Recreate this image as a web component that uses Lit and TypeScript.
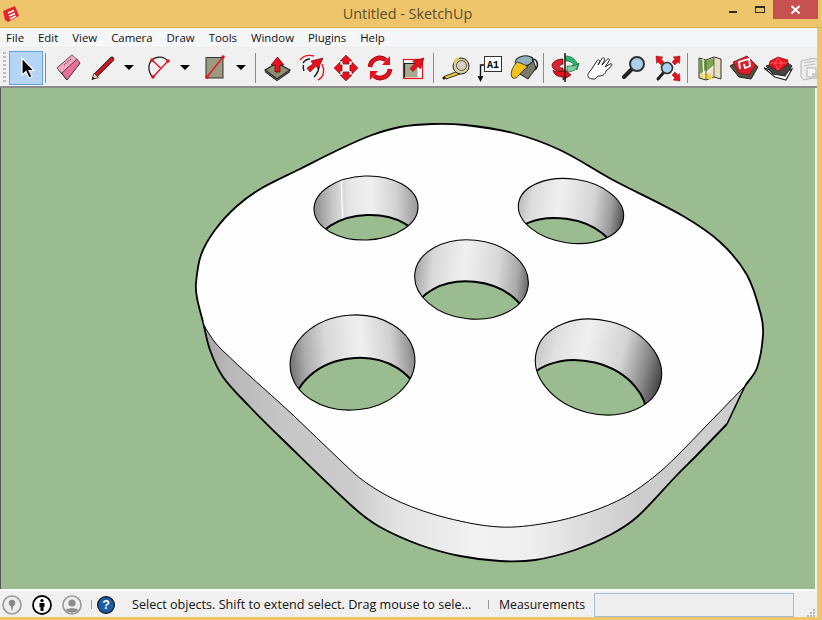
import { LitElement, html, css, svg } from "lit";
import { customElement } from "lit/decorators.js";

type Pt = [number, number];

// smooth curve through the traced points, tangent handles scaled by chord so it doesn't overshoot
function smooth(p: Pt[]): string {
  let d = `M${p[0][0]} ${p[0][1]}`;
  for (let i = 0; i < p.length - 1; i++) {
    const a = p[Math.max(i - 1, 0)];
    const b = p[i];
    const c = p[i + 1];
    const e = p[Math.min(i + 2, p.length - 1)];
    const len = Math.hypot(c[0] - b[0], c[1] - b[1]) / 3;
    const t1 = Math.hypot(c[0] - a[0], c[1] - a[1]) || 1;
    const t2 = Math.hypot(e[0] - b[0], e[1] - b[1]) || 1;
    const c1x = b[0] + ((c[0] - a[0]) / t1) * len;
    const c1y = b[1] + ((c[1] - a[1]) / t1) * len;
    const c2x = c[0] - ((e[0] - b[0]) / t2) * len;
    const c2y = c[1] - ((e[1] - b[1]) / t2) * len;
    d += ` C${c1x.toFixed(1)} ${c1y.toFixed(1)} ${c2x.toFixed(1)} ${c2y.toFixed(1)} ${c[0]} ${c[1]}`;
  }
  return d;
}

const upperEdge: Pt[] = [
  [203, 322], [197, 298], [196, 283], [201, 255], [215, 230], [237, 206], [262, 188], [300, 169], [340, 149],
  [372, 135], [400, 127], [432, 124], [465, 125], [513, 133], [560, 150], [613, 180], [683, 216], [720, 242],
  [747, 275], [761, 315], [763, 335], [757, 368], [745, 386],
];
const lowerEdge: Pt[] = [
  [745, 386], [707, 425], [677, 456], [655, 476], [625, 497], [590, 512], [547, 523], [500, 527], [447, 518],
  [400, 502], [365, 482], [340, 460], [293, 415], [220, 348], [206, 329], [203, 322],
];
const outerEdge: Pt[] = [
  [203, 322], [210, 350], [223, 377], [250, 407], [280, 437], [353, 507], [380, 527], [420, 545],
  [460, 556], [500, 561], [535, 560], [575, 550], [610, 535], [637, 517], [677, 475], [697, 455], [727, 424],
];

interface Hole {
  cx: number; cy: number; rx: number; ry: number; rot: number; dx: number; dy: number;
  stops: [number, string][];
}

const holes: Hole[] = [
  { cx: 366, cy: 208, rx: 52, ry: 32, rot: -2, dx: 2, dy: 39, stops: [[0, "#8c8c8c"], [0.18, "#c6c6c6"], [0.26, "#dadada"], [0.27, "#fafafa"], [0.29, "#d8d8d8"], [0.33, "#e4e4e4"], [0.55, "#f0f0f0"], [0.8, "#d0d0d0"], [1, "#999"]] },
  { cx: 571, cy: 211, rx: 53, ry: 32, rot: 8, dx: -9, dy: 39.5, stops: [[0, "#bbb"], [0.12, "#dcdcdc"], [0.38, "#f0f0f0"], [0.7, "#d4d4d4"], [0.88, "#999"], [1, "#505050"]] },
  { cx: 471.5, cy: 279.5, rx: 57, ry: 39.5, rot: 6, dx: -1, dy: 41.5, stops: [[0, "#a4a4a4"], [0.15, "#d8d8d8"], [0.42, "#f0f0f0"], [0.72, "#d8d8d8"], [0.9, "#a8a8a8"], [1, "#666"]] },
  { cx: 352.5, cy: 362.5, rx: 62.5, ry: 47.5, rot: -5, dx: 4, dy: 43, stops: [[0, "#707070"], [0.12, "#aaaaaa"], [0.3, "#d8d8d8"], [0.58, "#f0f0f0"], [0.82, "#d0d0d0"], [1, "#888"]] },
  { cx: 598.5, cy: 367, rx: 64, ry: 46.8, rot: 14, dx: -15, dy: 41, stops: [[0, "#c8c8c8"], [0.14, "#e0e0e0"], [0.36, "#f0f0f0"], [0.66, "#d4d4d4"], [0.86, "#888"], [1, "#444"]] },
];

const sideStops: [number, string][] = [
  [0, "#a0a0a0"], [0.05, "#b8b8b8"], [0.15, "#c6c6c6"], [0.28, "#cccccc"], [0.36, "#e2e2e2"],
  [0.5, "#f2f2f2"], [0.6, "#efefef"], [0.7, "#dcdcdc"], [0.8, "#cccccc"], [1, "#cfcfcf"],
];

const red = "#e8101c";

const icons: Record<string, unknown> = {
  select: svg`<path d="M13 7V24L17 20.5 20 27 23 25.5 20 19.5H25Z" fill="#000" stroke="#fff" stroke-width="1.2"/>`,
  eraser: svg`
    <path d="M6 17 21 4 29 12 16 29Z" fill="#f28ca8" stroke="#333"/>
    <path d="M6 17 21 4 26 8 11 22Z" fill="#f7a8c0" stroke="#555" stroke-width=".6"/>
    <path d="M11 22 26 8 29 12 16 29Z" fill="#ec6f96" stroke="#333" stroke-width=".7"/>
    <path d="M13 14 20 8" stroke="#8a4a5c" stroke-width="1.4" stroke-dasharray="1 1"/>`,
  pencil: svg`
    <path d="M10 24 26 8" stroke="#222" stroke-width="4.6" stroke-linecap="round"/>
    <path d="M10 24 26 8" stroke="#e3101d" stroke-width="2.8" stroke-linecap="round"/>
    <path d="M6 28.5 8 22 12.5 26.5Z" fill="#e5cfa8" stroke="#222" stroke-width=".8"/>
    <path d="M6 28.5 6.8 26 9 27.6Z" fill="#111"/>`,
  arc: svg`
    <path d="M26 10C22 5 14 5 10 9 5.5 13 6 22 11 26" fill="none" stroke="#222" stroke-width="1.3"/>
    <path d="M10 9 19 17.5M26 10 11 26" stroke="${red}" stroke-width="1.3"/>
    <g fill="${red}"><circle cx="10" cy="9" r="1.8"/><circle cx="26" cy="10" r="1.8"/><circle cx="11" cy="26" r="1.8"/></g>`,
  rect: svg`
    <rect x="8" y="6.5" width="17" height="20.5" fill="#9b9b82" stroke="#333"/>
    <path d="M25 6 9 26" stroke="${red}" stroke-width="1.3"/>
    <g fill="${red}"><circle cx="25" cy="6" r="1.8"/><circle cx="9" cy="26" r="1.8"/></g>`,
  pushpull: svg`
    <path d="M5 19 17 12 30 19 17 28Z" fill="#8e8e70" stroke="#222" stroke-width="1.2"/>
    <path d="M5 20.5 17 29.5 30 20.5" fill="none" stroke="#333" stroke-width="1.2"/>
    <path d="M17.5 6 24 14H20V21H15V14H11Z" fill="${red}" stroke="#500" stroke-width=".7"/>`,
  follow: svg`
    <path d="M6 9C10 4 16 4 20 5M28 13C31 19 30 26 24 29" fill="none" stroke="${red}" stroke-width="1.4"/>
    <path d="M9 12C11 9 13 8 16 8M10 20C9 18 9 16 9.5 14M25 15C25 20 23 23 20 26" fill="none" stroke="#222" stroke-width="1.5"/>
    <path d="M13 17 19 13 17 10 29 7 24 18 22 15 16 21Z" fill="${red}" stroke="#500" stroke-width=".6"/>`,
  move: svg`
    <path d="M15 12H21V22H15Z M13 14V20H23V14Z" fill="#d4d4d4"/>
    <g fill="${red}" stroke="#600" stroke-width=".5">
      <path d="M18 4 24 10H21V13H15V10H12Z"/>
      <path d="M18 30 24 24H21V21H15V24H12Z"/>
      <path d="M6 17 12 11V14H14V20H12V23Z"/>
      <path d="M30 17 24 11V14H22V20H24V23Z"/>
    </g>
    <rect x="15.5" y="14.5" width="5" height="5" fill="#eee"/>`,
  rotate: svg`
    <g fill="none" stroke="#7a0a10" stroke-width="4.6"><path d="M8 16A10 10 0 0 1 24 9"/><path d="M28 18A10 10 0 0 1 12 25"/></g>
    <g fill="none" stroke="${red}" stroke-width="3.4"><path d="M8 16A10 10 0 0 1 24 9"/><path d="M28 18A10 10 0 0 1 12 25"/></g>
    <path d="M28 5V14H20Z M8 29V20H16Z" fill="${red}"/>`,
  scale: svg`
    <rect x="7.5" y="8.5" width="19" height="19" fill="#fff" stroke="${red}" stroke-width="1.2"/>
    <rect x="8.5" y="12.5" width="13" height="14" fill="#a9a98e"/>
    <path d="M8.5 26.5V12.5H21.5" fill="none" stroke="#222" stroke-width="1.2"/>
    <path d="M28 7 24.5 18 22 15.5 17 20.5 14 17.5 19 12.5 16.5 10Z" fill="${red}" stroke="#600" stroke-width=".5"/>`,
  tape: svg`
    <path d="M5 25.5 18 20.5 21 23 7 28Z" fill="#e9c93a" stroke="#222" stroke-width=".9"/>
    <circle cx="22" cy="15" r="8" fill="#d9cf9a" stroke="#222"/>
    <circle cx="22.5" cy="14.5" r="5" fill="#d6d0bc" stroke="#555"/>
    <path d="M14.6 12.5C16 9 18 7.5 20 7" fill="none" stroke="#e9c93a" stroke-width="1.6"/>
    <circle cx="5" cy="27" r="1.6" fill="#222"/>`,
  text: svg`
    <rect x="11.5" y="5.5" width="17" height="15" fill="#fff" stroke="#333"/>
    <text x="20" y="17" class="a1">A1</text>
    <path d="M11 14H7.5V26" fill="none" stroke="#111" stroke-width="1.4"/>
    <path d="M4.5 25H10.5L7.5 31Z" fill="#111"/>`,
  paint: svg`
    <path d="M11 8 25 6 29 17 21 28 11 22Z" fill="#7a7868" stroke="#222"/>
    <ellipse cx="17" cy="10" rx="9" ry="5" transform="rotate(-10 17 10)" fill="#8fb0b8" stroke="#222"/>
    <path d="M10 11C5 16 2 25 6 27 11 29 13 20 21 16 17 13 13 12 10 11Z" fill="#f2c21d" stroke="#222" stroke-width=".8"/>
    <path d="M25 8C31 8 32 15 28 19" fill="none" stroke="#222" stroke-width="1.6"/>`,
  orbit: svg`
    <path d="M17 5C23 5 28 8 29 13L31 12 29 19 24 14 26 14C25 11 21 10 18 10Z" fill="#2fb36e" stroke="#163" stroke-width=".7"/>
    <path d="M19 15C24 15 28 15 30 13 30 18 25 21 19 21Z" fill="#7fd0a0" stroke="#163" stroke-width=".7"/>
    <path d="M15 8C10 8 5 10 4 14 4 18 8 20 15 21V17C11 17 9 15 15 13Z" fill="#d9232e" stroke="#500" stroke-width=".7"/>
    <path d="M16 20C11 21 7 21 5 19 6 24 10 26 15 26L15 29 23 24 16 18Z" fill="${red}" stroke="#500" stroke-width=".7"/>
    <path d="M17 2V31" stroke="#222" stroke-width="1.6"/>`,
  pan: svg`
    <path d="M7 27C5 25 6 22 9 19L15 10C16 8 18 9 17.5 11L16 14 20 7.5C21 6 23 7 22.5 9L20 14 25 8.5C26.5 7 28 8.5 27 10L23 16 28 13C30 12 30.5 14 29 15.5L24 20C23 24 20 25 16 25L13 28C11 28 9 28 7 27Z" fill="#fff" stroke="#222" stroke-width="1"/>`,
  zoom: svg`
    <path d="M8 26 16 18" stroke="#222" stroke-width="4" stroke-linecap="round"/>
    <circle cx="21" cy="13" r="7" fill="#a8d0f0" stroke="#333" stroke-width="2"/>`,
  extents: svg`
    <path d="M8 28 14 21" stroke="#222" stroke-width="3" stroke-linecap="round"/>
    <circle cx="17" cy="17" r="5.5" fill="#a8d0f0" stroke="#333" stroke-width="1.6"/>
    <g fill="${red}" stroke="#600" stroke-width=".4">
      <path d="M6 5 13 6 11 8 14 11 11 14 8 11 6.5 12.5Z"/>
      <path d="M30 5 23 6 25 8 22 11 25 14 28 11 29.5 12.5Z"/>
      <path d="M30 30 23 29 25 27 22 24 25 21 28 24 29.5 22.5Z"/>
    </g>`,
  map: svg`
    <path d="M6 7 13 9 21 6 28 8V28L21 26 13 29 6 27Z" fill="#e6dcc0" stroke="#333"/>
    <path d="M6.5 8 13 10V19L6.5 23Z" fill="#6f9a4a"/>
    <path d="M13 10 21 7V15L13 22Z" fill="#7ea84e"/>
    <path d="M7 26 13 21 21 28 13 28Z" fill="#f0cf3a"/>
    <path d="M21 15 13 22M10 8 11 27" stroke="#fff" stroke-width="1.2" fill="none"/>
    <path d="M13 9V29M21 6V26" stroke="#444" stroke-width=".7"/>`,
  warehouse: svg`
    <path d="M3 15 12 26 24 28 31 16 20 6Z" fill="#55503f" stroke="#222"/>
    <path d="M6 11 20 5 29 14 22 24 12 22Z" fill="#dd1f2b" stroke="#6b0b10" stroke-width=".7"/>
    <path d="M13 18 12 11 22 8 23 15 18 17 17 13" stroke="#fff" stroke-width="1.8" fill="none"/>`,
  ruby: svg`
    <path d="M3 17 14 26 25 29 31 18 20 22Z" fill="#fff" stroke="#222" stroke-width="1.2"/>
    <path d="M5 15 12 23 24 25 31 15 24 10Z" fill="#444" stroke="#222"/>
    <path d="M9 10 17 6 27 9 26 14 17 20 8 14Z" fill="#e8141f" stroke="#700" stroke-width=".6"/>
    <path d="M9 12H26M14 12 17 19 21 12 17 7Z" fill="none" stroke="#ff7a80" stroke-width=".7"/>`,
  layers: svg`
    <g opacity=".42">
      <path d="M6 10 19 7 23 9V26L9 29 6 26Z" fill="#e8e8e8" stroke="#666"/>
      <path d="M9 12 20 10M9 15 20 13" stroke="#777"/>
      <rect x="12" y="17" width="9" height="9" fill="#fff" stroke="#666"/>
      <rect x="17" y="22" width="6" height="6" fill="#999"/>
    </g>`,
};

@customElement("app-root")
export class AppRoot extends LitElement {
  static styles = css`
    :host {
      display: block;
      width: 822px;
      height: 620px;
      background: #eec56b;
      font-family: "Open Sans", "Liberation Sans", sans-serif;
      color: #111;
      overflow: hidden;
    }

    .titlebar {
      position: relative;
      height: 28px;
      display: flex;
      justify-content: center;
      align-items: center;
      padding-right: 7px;
      box-sizing: border-box;
      border-bottom: 1px solid #d6ae5c;
      font-size: 14.4px;
      color: #5c4c30;
    }
    .logo {
      position: absolute;
      left: 2px;
      top: 5px;
      width: 18px;
      height: 18px;
    }
    .controls {
      position: absolute;
      top: 0;
      right: 4px;
      display: flex;
      align-items: flex-start;
    }
    .ctl {
      width: 26px;
      height: 19px;
    }
    .ctl svg {
      display: block;
    }
    .close {
      width: 45px;
      background: #c75050;
    }

    .main {
      width: 817px;
      height: 589px;
      background: #f0f0f0;
      display: flex;
      flex-direction: column;
    }

    .menu {
      height: 18px;
      flex: none;
      box-sizing: border-box;
      background: #f5f6f7;
      display: flex;
      align-items: center;
      gap: 14px;
      padding: 2px 0 0 6px;
      font-size: 11.4px;
      border-bottom: 1px solid #fbfbfb;
    }

    .toolbar {
      height: 42px;
      flex: none;
      box-sizing: border-box;
      padding: 5px 0 0 3px;
      display: flex;
      align-items: flex-start;
      overflow: hidden;
      border-bottom: 2px solid #8b8b8b;
    }
    .grip {
      flex: none;
      width: 3px;
      height: 32px;
      margin: 1px 3px 0 0;
      background: repeating-linear-gradient(#bdbdbd 0 2px, transparent 2px 4px);
    }
    .tool {
      flex: none;
      width: 34px;
      height: 34px;
      box-sizing: border-box;
    }
    .tool svg,
    .dd svg {
      display: block;
      overflow: visible;
    }
    .tool.active {
      background: #b5d5f5;
      box-shadow: inset 0 0 0 1px #64a3e0;
    }
    .dd {
      flex: none;
      width: 15px;
      height: 34px;
      margin: 0 5px 0 2px;
    }
    .eraser {
      margin-right: 1px;
    }
    .sep {
      flex: none;
      width: 1px;
      height: 30px;
      margin: 2px 5px 0 3px;
      background: #8c8c8c;
    }
    .sep.a {
      margin-left: 2px;
    }
    .sep.b {
      margin-left: 1px;
      margin-right: 4px;
    }
    .sep.c {
      margin-left: 2px;
      margin-right: 4px;
    }
    .a1 {
      font-family: "Liberation Mono", monospace;
      font-size: 10px;
      font-weight: 700;
      text-anchor: middle;
    }

    .view {
      height: 501px;
      flex: none;
      margin-right: 2px;
      border-left: 1px solid #555;
      background: #9bbb91;
    }
    .view svg {
      display: block;
    }

    .status {
      flex: 1;
      display: flex;
      align-items: center;
      box-sizing: border-box;
      border-top: 2px solid #fbfbfb;
      padding: 1px 0 0 2px;
      font-size: 12.3px;
    }
    .sicon {
      flex: none;
      display: block;
      width: 20px;
      height: 20px;
      margin-right: 10px;
    }
    .sicon.help {
      width: 18px;
      height: 18px;
      margin-right: 17px;
    }
    .ssep {
      flex: none;
      width: 1px;
      height: 9px;
      background: #999;
      margin: 0 5px 0 -1px;
    }
    .hint {
      flex: none;
      width: 356px;
      white-space: nowrap;
      font-size: 12.6px;
    }
    .vcb-label {
      flex: none;
      width: 95px;
      white-space: nowrap;
    }
    .ssep.wide {
      margin: 0 10px 0 0;
    }
    .vcb {
      flex: none;
      width: 200px;
      height: 24px;
      box-sizing: border-box;
      border: 1px solid #a9bcd6;
      background: #eeeeee;
      align-self: flex-end;
    }
    .resize {
      flex: none;
      display: block;
      margin: 17px 0 0 13px;
      align-self: flex-start;
    }
  `;

  private tool(name: string, extra = "") {
    return html`<div class="tool ${name} ${extra}">
      <svg width="34" height="34" viewBox="0 0 34 34">${icons[name]}</svg>
    </div>`;
  }

  private dropdown() {
    return html`<div class="dd">
      <svg width="15" height="34" viewBox="0 0 15 34"><path d="M2 14H12L7 19Z" fill="#000" /></svg>
    </div>`;
  }

  private model() {
    const faceFill = `${smooth(upperEdge)} ${smooth(lowerEdge).replace(/^M/, "L")} Z`;
    const sideFill = `${smooth(outerEdge)} L745 386 L203 322 Z`;
    return svg`
      <defs>
        <linearGradient id="side" gradientUnits="userSpaceOnUse" x1="200" y1="0" x2="750" y2="0">
          ${sideStops.map(([o, c]) => svg`<stop offset=${o} stop-color=${c}></stop>`)}
        </linearGradient>
        ${holes.map(
          (h, i) => svg`
            <linearGradient id="wall${i}">
              ${h.stops.map(([o, c]) => svg`<stop offset=${o} stop-color=${c}></stop>`)}
            </linearGradient>
            <clipPath id="rim${i}">
              <ellipse cx=${h.cx} cy=${h.cy} rx=${h.rx} ry=${h.ry} transform="rotate(${h.rot} ${h.cx} ${h.cy})"></ellipse>
            </clipPath>`
        )}
      </defs>
      <path d=${sideFill} fill="url(#side)"></path>
      <path d=${smooth(outerEdge)} fill="none" stroke="#000" stroke-width="1.8"></path>
      <path d="M727 424 745 386" fill="none" stroke="#000" stroke-width="1.6"></path>
      <path d=${faceFill} fill="#fefefe"></path>
      <path d=${smooth(lowerEdge)} fill="none" stroke="#000" stroke-width="1"></path>
      <path d=${smooth(upperEdge)} fill="none" stroke="#000" stroke-width="1.8"></path>
      ${holes.map((h, i) => {
        const ex = h.cx + h.dx;
        const ey = h.cy + h.dy;
        return svg`
          <ellipse cx=${h.cx} cy=${h.cy} rx=${h.rx} ry=${h.ry} transform="rotate(${h.rot} ${h.cx} ${h.cy})" fill="url(#wall${i})"></ellipse>
          <g clip-path="url(#rim${i})">
            <ellipse cx=${ex} cy=${ey} rx=${h.rx} ry=${h.ry} transform="rotate(${h.rot} ${ex} ${ey})" fill="#9bbb91" stroke="#000" stroke-width="2"></ellipse>
          </g>
          <ellipse cx=${h.cx} cy=${h.cy} rx=${h.rx} ry=${h.ry} transform="rotate(${h.rot} ${h.cx} ${h.cy})" fill="none" stroke="#000" stroke-width="1.1"></ellipse>`;
      })}
    `;
  }

  render() {
    return html`
      <div class="titlebar">
        <svg class="logo" viewBox="0 0 18 18">
          <path d="M1 6 13 1 17 11 6 17 3 15Z" fill="#e3262e" />
          <path d="M6 8 12 5.5M7 11 13 8.5M8 14 14 11" stroke="#fff" stroke-width="1.4" fill="none" />
        </svg>
        Untitled - SketchUp
        <div class="controls">
          <div class="ctl">
            <svg width="26" height="19"><rect x="8" y="11" width="8" height="2" fill="#2b2b2b" /></svg>
          </div>
          <div class="ctl">
            <svg width="26" height="19">
              <rect x="8.5" y="6.5" width="9" height="6" fill="none" stroke="#2b2b2b" />
              <rect x="8" y="6" width="10" height="2" fill="#2b2b2b" />
            </svg>
          </div>
          <div class="ctl close">
            <svg width="45" height="19">
              <path d="M18.5 6 26.5 13.5M26.5 6 18.5 13.5" stroke="#fff" stroke-width="2" />
            </svg>
          </div>
        </div>
      </div>
      <div class="main">
        <div class="menu">
          ${["File", "Edit", "View", "Camera", "Draw", "Tools", "Window", "Plugins", "Help"].map(
            (m) => html`<span>${m}</span>`
          )}
        </div>
        <div class="toolbar">
          <div class="grip"></div>
          ${this.tool("select", "active")}
          <div class="sep a"></div>
          ${this.tool("eraser")}
          ${this.tool("pencil")}${this.dropdown()}
          ${this.tool("arc")}${this.dropdown()}
          ${this.tool("rect")}${this.dropdown()}
          <div class="sep b"></div>
          ${this.tool("pushpull")}${this.tool("follow")}${this.tool("move")}${this.tool("rotate")}${this.tool("scale")}
          <div class="sep"></div>
          ${this.tool("tape")}${this.tool("text")}${this.tool("paint")}
          <div class="sep c"></div>
          ${this.tool("orbit")}${this.tool("pan")}${this.tool("zoom")}${this.tool("extents")}
          <div class="sep"></div>
          ${this.tool("map")}${this.tool("warehouse")}${this.tool("ruby")}${this.tool("layers")}
        </div>
        <div class="view">
          <svg width="814" height="501" viewBox="1 88 814 501">${this.model()}</svg>
        </div>
        <div class="status">
          <svg class="sicon" viewBox="0 0 20 20">
            <circle cx="10" cy="10" r="9" fill="#eee" stroke="#999" stroke-width="1.6" />
            <circle cx="10" cy="8" r="3.2" fill="#888" />
            <path d="M8.6 10H11.4L10 17Z" fill="#888" />
          </svg>
          <svg class="sicon" viewBox="0 0 20 20">
            <circle cx="10" cy="10" r="9" fill="#fff" stroke="#000" stroke-width="1.8" />
            <circle cx="10" cy="5.6" r="1.7" fill="#000" />
            <path d="M7.5 8H12.5V12H11.5V16H8.5V12H7.5Z" fill="#000" />
          </svg>
          <svg class="sicon" viewBox="0 0 20 20">
            <circle cx="10" cy="10" r="9" fill="#eee" stroke="#999" stroke-width="1.6" />
            <circle cx="10" cy="8" r="3.6" fill="#8c8c8c" />
            <path d="M3.6 15C5 12.5 15 12.5 16.4 15A9 9 0 0 1 3.6 15Z" fill="#8c8c8c" />
          </svg>
          <div class="ssep"></div>
          <svg class="sicon help" viewBox="0 0 18 18">
            <circle cx="9" cy="9" r="8.4" fill="#1b5da6" stroke="#111" stroke-width="1.2" />
            <text x="9" y="13.2" text-anchor="middle" font-family="Liberation Sans" font-size="12.5" font-weight="700" fill="#fff">?</text>
          </svg>
          <span class="hint">Select objects. Shift to extend select. Drag mouse to sele...</span>
          <div class="ssep wide"></div>
          <span class="vcb-label">Measurements</span>
          <div class="vcb"></div>
          <svg class="resize" width="8" height="8" viewBox="0 0 8 8" fill="#b5b5b5">
            <rect x="6" y="0" width="2" height="2" />
            <rect x="3" y="3" width="2" height="2" />
            <rect x="6" y="3" width="2" height="2" />
            <rect x="0" y="6" width="2" height="2" />
            <rect x="3" y="6" width="2" height="2" />
            <rect x="6" y="6" width="2" height="2" />
          </svg>
        </div>
      </div>
    `;
  }
}
